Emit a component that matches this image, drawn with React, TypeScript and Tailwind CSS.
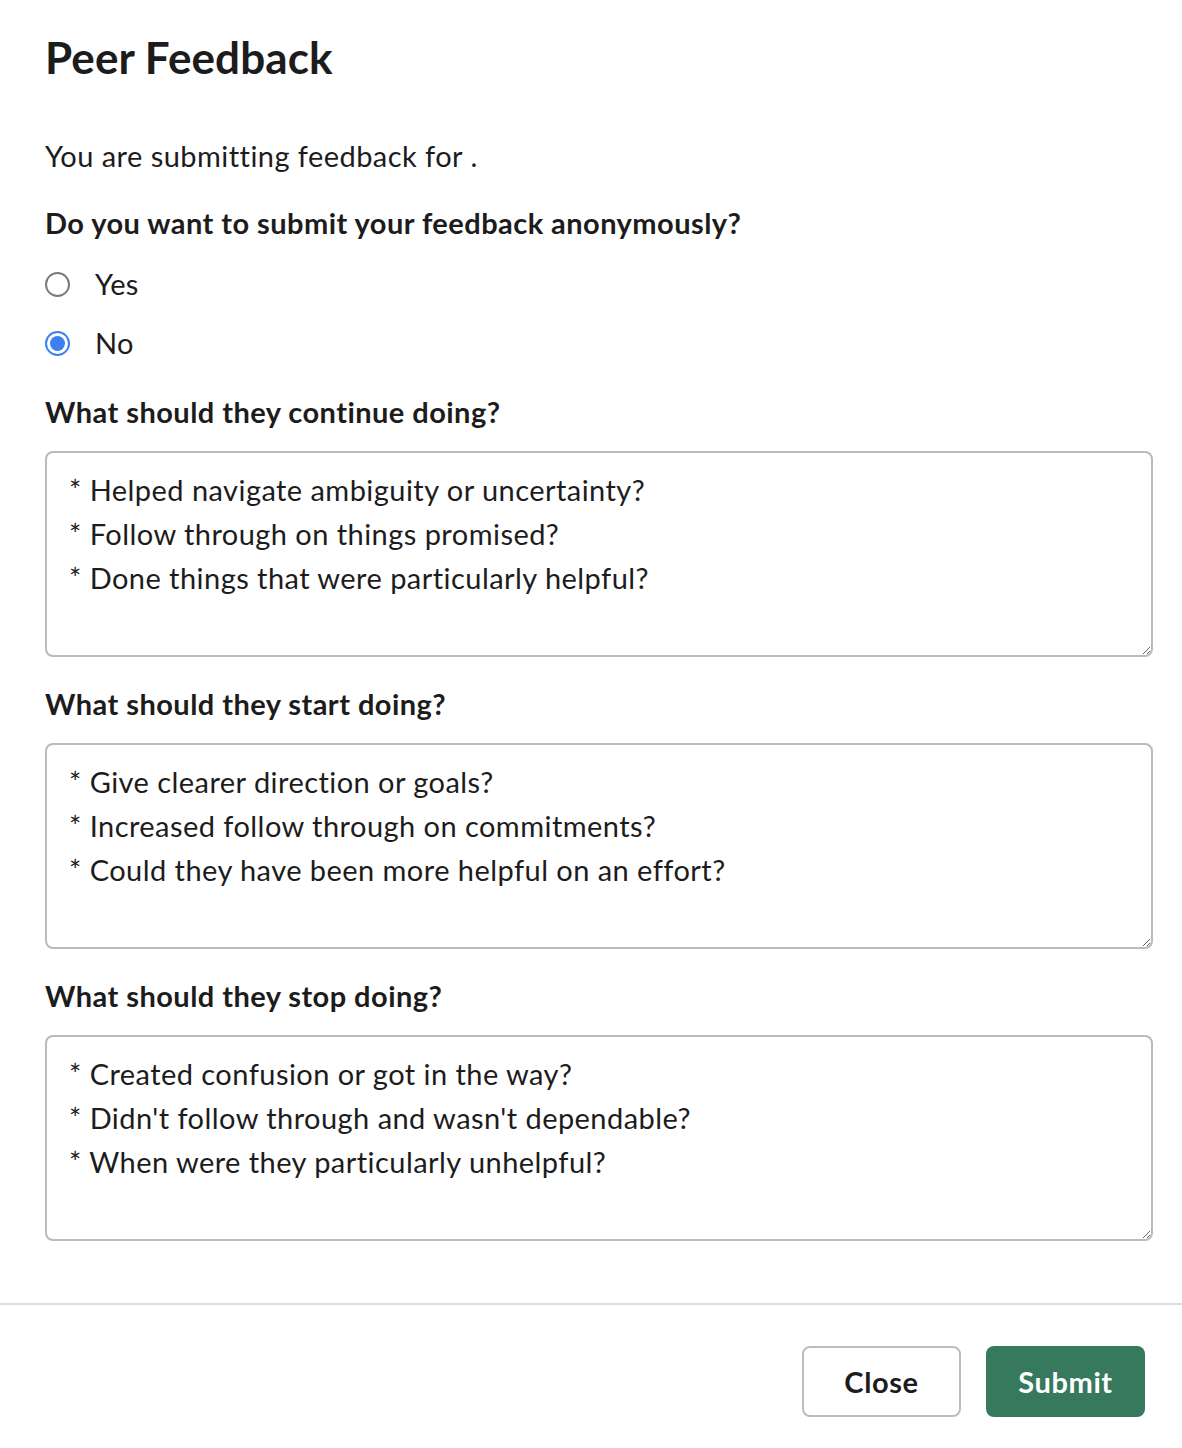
import React from "react";

const font = { fontFamily: "Lato, 'Noto Sans', sans-serif" };

function Radio({ checked, label }: { checked?: boolean; label: string }) {
  return (
    <div className="flex items-center h-[42px]">
      {checked ? (
        <span className="w-[25px] h-[25px] rounded-full border-2 border-[#3b7ff2] bg-white flex items-center justify-center">
          <span className="w-[15px] h-[15px] rounded-full bg-[#3b7ff2]" />
        </span>
      ) : (
        <span className="w-[25px] h-[25px] rounded-full border-2 border-[#7a7a7a] bg-white" />
      )}
      <span className="ml-[25px] text-[29px] leading-[42px] tracking-[0.3px] text-[#1d1c1d]">{label}</span>
    </div>
  );
}

function Field({ label, lines, first }: { label: string; lines: string[]; first?: boolean }) {
  return (
    <div className={first ? "mt-[27px]" : "mt-[26px]"}>
      <div className="text-[29px] leading-[42px] font-bold tracking-[0.45px] text-[#1d1c1d]">{label}</div>
      <textarea
        className="mt-[18px] block w-full h-[206px] border-2 border-[#bcbbbc] rounded-[8px] pl-[22px] pr-[22px] pt-[15px] text-[29px] leading-[44px] tracking-[0.45px] text-[#1d1c1d] outline-none resize-y"
        style={font}
        defaultValue={lines.join("\n")}
      />
    </div>
  );
}

export default function App() {
  return (
    <div className="w-[1182px] h-[1448px] bg-white flex flex-col" style={font}>
      <div className="px-[45px] pr-[29px]">
        <h1 className="pt-[31px] text-[44px] leading-[53px] font-bold text-[#1d1c1d] tracking-[0.1px]">Peer Feedback</h1>
        <p className="mt-[51px] text-[29px] leading-[42px] tracking-[0.45px] text-[#1d1c1d]">You are submitting feedback for .</p>
        <div className="mt-[25px] text-[29px] leading-[42px] font-bold tracking-[0.45px] text-[#1d1c1d]">
          Do you want to submit your feedback anonymously?
        </div>
        <div className="mt-[19px] flex flex-col gap-[17px]">
          <Radio label="Yes" />
          <Radio label="No" checked />
        </div>
        <Field
          first
          label="What should they continue doing?"
          lines={[
            "* Helped navigate ambiguity or uncertainty?",
            "* Follow through on things promised?",
            "* Done things that were particularly helpful?",
          ]}
        />
        <Field
          label="What should they start doing?"
          lines={[
            "* Give clearer direction or goals?",
            "* Increased follow through on commitments?",
            "* Could they have been more helpful on an effort?",
          ]}
        />
        <Field
          label="What should they stop doing?"
          lines={[
            "* Created confusion or got in the way?",
            "* Didn't follow through and wasn't dependable?",
            "* When were they particularly unhelpful?",
          ]}
        />
      </div>
      <div className="mt-[62px] h-[2px] bg-[#dddddd]" />
      <div className="flex justify-end gap-[25px] pr-[37px] pt-[41px]">
        <button className="w-[159px] h-[71px] rounded-[8px] border-2 border-[#bcbcbc] bg-white text-[29px] tracking-[0.6px] font-bold text-[#1d1c1d]" style={font}>
          Close
        </button>
        <button className="w-[159px] h-[71px] rounded-[8px] bg-[#36795c] text-[29px] tracking-[0.6px] font-bold text-white" style={font}>
          Submit
        </button>
      </div>
    </div>
  );
}
